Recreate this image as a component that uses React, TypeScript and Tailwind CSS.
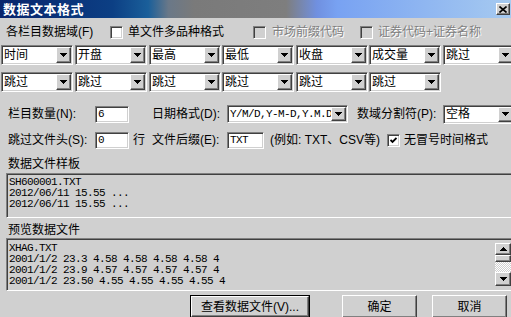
import React from "react";

const sunken =
  "border border-t-[#808080] border-l-[#808080] border-b-white border-r-white shadow-[inset_1px_1px_0_#404040,inset_-1px_-1px_0_#d0d0d0]";
const raised =
  "border border-t-white border-l-white border-b-[#404040] border-r-[#404040] shadow-[inset_-1px_-1px_0_#808080]";
const mono = "font-['Liberation_Mono','DejaVu_Sans_Mono',monospace] text-[11px] tracking-[-0.6px]";
const dim = "text-[#808080] [text-shadow:1px_1px_0_#fff]";

function Tri({ up = false }: { up?: boolean }) {
  return (
    <svg width="7" height="4" viewBox="0 0 7 4" shapeRendering="crispEdges">
      {up ? (
        <>
          <rect x="3" y="0" width="1" height="1" />
          <rect x="2" y="1" width="3" height="1" />
          <rect x="1" y="2" width="5" height="1" />
          <rect x="0" y="3" width="7" height="1" />
        </>
      ) : (
        <>
          <rect x="0" y="0" width="7" height="1" />
          <rect x="1" y="1" width="5" height="1" />
          <rect x="2" y="2" width="3" height="1" />
          <rect x="3" y="3" width="1" height="1" />
        </>
      )}
    </svg>
  );
}

function Combo({ text, className = "w-[72px] h-[20px]", isMono = false }: { text: string; className?: string; isMono?: boolean }) {
  return (
    <div className={`flex shrink-0 bg-white p-[1px] ${sunken} ${className}`}>
      <div className={`flex flex-1 items-center overflow-hidden whitespace-nowrap pl-[1px] ${isMono ? mono : "text-[12px]"}`}>
        {text}
      </div>
      <div className={`flex w-[15px] items-center justify-center bg-[#d0d0d0] ${raised}`}>
        <Tri />
      </div>
    </div>
  );
}

function Field({ text, className }: { text: string; className: string }) {
  return (
    <div className={`flex h-[17px] shrink-0 items-center bg-white pl-[2px] ${sunken} ${className} ${mono}`}>{text}</div>
  );
}

function Check({ checked = false, disabled = false }: { checked?: boolean; disabled?: boolean }) {
  return (
    <div className={`flex h-[13px] w-[13px] shrink-0 items-center justify-center ${disabled ? "bg-[#d0d0d0]" : "bg-white"} ${sunken}`}>
      {checked && (
        <svg width="7" height="7" viewBox="0 0 7 7">
          <polyline points="0.5,3 2.5,5 6.5,1" fill="none" stroke="#000" strokeWidth="1.8" />
        </svg>
      )}
    </div>
  );
}

const row1 = ["时间", "开盘", "最高", "最低", "收盘", "成交量", "跳过"];
const row2 = ["跳过", "跳过", "跳过", "跳过", "跳过", "跳过"];
const gaps = ["ml-[1px]", "ml-[2px]", "ml-[2px]", "ml-[1px]", "ml-[2px]", "ml-[1px]", "ml-[2px]"];

export default function App() {
  return (
    <div className="h-[317px] w-[511px] overflow-hidden bg-[#d0d0d0] font-['Liberation_Sans','Noto_Sans_CJK_SC',sans-serif] text-[12px] leading-none text-black">
      {/* title bar */}
      <div className="flex h-[18px] items-center justify-between bg-[linear-gradient(to_right,#08246c_0%,#0c3f84_22%,#1a5f9a_29%,#6a7888_33%,#7a7a7a_38%,#7e7e7e_56%,#7090e0_62%,#78a2f2_66%,#a6caf0_100%)] pl-[3px] pr-[1px]">
        <span className="text-[13px] font-bold tracking-[0.5px] text-white">数据文本格式</span>
        <div className={`flex h-[12px] w-[14px] items-center justify-center bg-[#d0d0d0] ${raised}`}>
          <svg width="8" height="7" viewBox="0 0 8 7">
            <path d="M0.5 0.5L7.5 6.5M7.5 0.5L0.5 6.5" stroke="#000" strokeWidth="1.6" />
          </svg>
        </div>
      </div>

      {/* field options */}
      <div className="mt-[6px] flex h-[16px] items-center pl-[6px]">
        <span className="w-[104px] shrink-0">各栏目数据域(F)</span>
        <div className="flex w-[143px] shrink-0 items-center gap-[5px]">
          <Check />
          <span>单文件多品种格式</span>
        </div>
        <div className="flex w-[107px] shrink-0 items-center gap-[6px]">
          <Check disabled />
          <span className={dim}>市场前缀代码</span>
        </div>
        <div className="flex shrink-0 items-center gap-[5px]">
          <Check disabled />
          <span className={dim}>证券代码+证券名称</span>
        </div>
      </div>

      <div className="mt-[5px] flex">
        {row1.map((t, i) => (
          <div key={i} className={gaps[i]}>
            <Combo text={t} />
          </div>
        ))}
      </div>
      <div className="mt-[7px] flex">
        {row2.map((t, i) => (
          <div key={i} className={gaps[i]}>
            <Combo text={t} />
          </div>
        ))}
      </div>

      {/* counts / formats */}
      <div className="mt-[13px] flex h-[18px] items-center pl-[8px]">
        <span className="w-[87px] shrink-0">栏目数量(N):</span>
        <Field text="6" className="w-[34px]" />
        <span className="w-[23px] shrink-0" />
        <span className="w-[75px] shrink-0">日期格式(D):</span>
        <Combo text="Y/M/D,Y-M-D,Y.M.D" className="h-[18px] w-[121px]" isMono />
        <span className="w-[9px] shrink-0" />
        <span className="w-[86px] shrink-0">数域分割符(P):</span>
        <Combo text="空格" className="h-[19px] w-[72px]" />
      </div>
      <div className="mt-[8px] flex h-[18px] items-center pl-[8px]">
        <span className="w-[87px] shrink-0">跳过文件头(S):</span>
        <Field text="0" className="w-[34px]" />
        <span className="w-[23px] shrink-0 pl-[4px]">行</span>
        <span className="w-[75px] shrink-0">文件后缀(E):</span>
        <Field text="TXT" className="w-[37px]" />
        <span className="ml-[6px] w-[117px] shrink-0">(例如: TXT、CSV等)</span>
        <Check checked />
        <span className="ml-[4px]">无冒号时间格式</span>
      </div>

      {/* sample */}
      <div className="mt-[7px] flex h-[16px] items-center pl-[8px]">数据文件样板</div>
      <div className={`ml-[6px] mt-[1px] h-[45px] w-[506px] pl-[2px] pt-[3px] leading-[11px] ${sunken} ${mono}`}>
        <div>SH600001.TXT</div>
        <div>2012/06/11 15.55 ...</div>
        <div>2012/06/11 15.55 ...</div>
      </div>

      {/* preview */}
      <div className="mt-[4px] flex h-[16px] items-center pl-[8px]">预览数据文件</div>
      <div className={`ml-[6px] flex h-[53px] w-[506px] ${sunken}`}>
        <div className={`flex-1 pl-[2px] pt-[4px] leading-[11px] ${mono}`}>
          <div>XHAG.TXT</div>
          <div>2001/1/2 23.3 4.58 4.58 4.58 4.58 4</div>
          <div>2001/1/2 23.9 4.57 4.57 4.57 4.57 4</div>
          <div>2001/1/2 23.50 4.55 4.55 4.55 4.55 4</div>
        </div>
        <div className="flex w-[16px] flex-col pb-[4px] pt-[4px]">
          <div className={`flex h-[12px] items-center justify-center bg-[#d0d0d0] ${raised}`}>
            <Tri up />
          </div>
          <div className={`h-[7px] bg-[#d0d0d0] ${raised}`} />
          <div className="flex-1 bg-[image:repeating-conic-gradient(#ffffff_0_25%,#d0d0d0_0_50%)] bg-[length:2px_2px]" />
          <div className={`flex h-[14px] items-center justify-center bg-[#d0d0d0] ${raised}`}>
            <Tri />
          </div>
        </div>
      </div>

      {/* buttons */}
      <div className="mt-[4px] flex pl-[190px]">
        <div className="h-[23px] w-[120px] border border-black">
          <div className={`flex h-full items-center justify-center ${raised}`}>查看数据文件(V)...</div>
        </div>
        <div className={`ml-[32px] flex h-[23px] w-[75px] items-center justify-center ${raised}`}>确定</div>
        <div className={`ml-[15px] flex h-[23px] w-[75px] items-center justify-center ${raised}`}>取消</div>
      </div>
    </div>
  );
}
